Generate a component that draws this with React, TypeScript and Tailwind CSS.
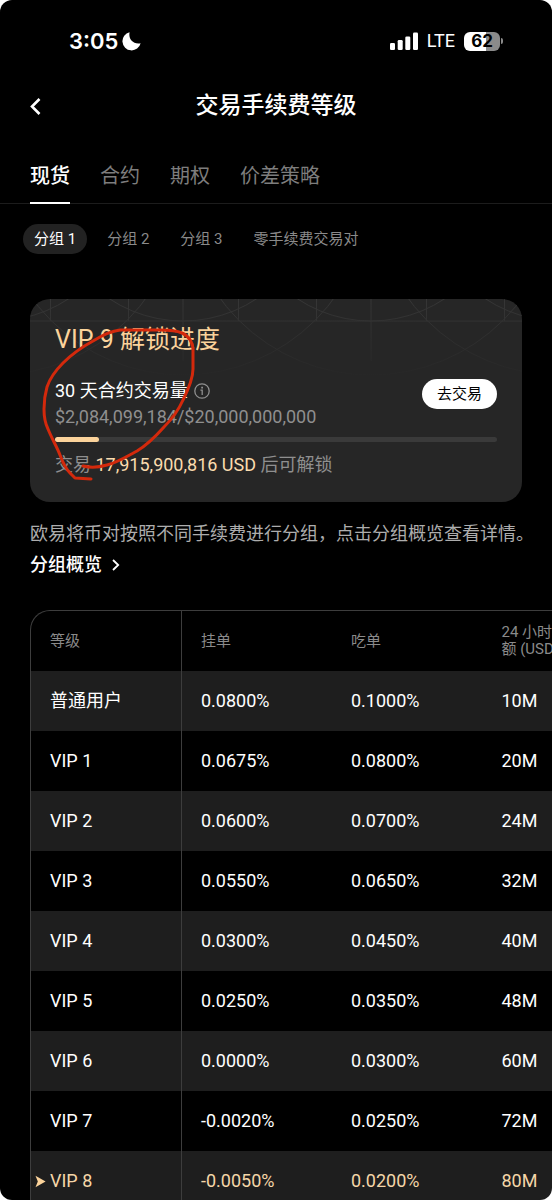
import React, { FC } from "react";

// types
type IFeeRow = {
  level: string;
  maker: string;
  taker: string;
  limit: string;
  current?: boolean;
};

const tabs = ["现货", "合约", "期权", "价差策略"];
const groups = ["分组 1", "分组 2", "分组 3", "零手续费交易对"];

const rows: IFeeRow[] = [
  { level: "普通用户", maker: "0.0800%", taker: "0.1000%", limit: "10M" },
  { level: "VIP 1", maker: "0.0675%", taker: "0.0800%", limit: "20M" },
  { level: "VIP 2", maker: "0.0600%", taker: "0.0700%", limit: "24M" },
  { level: "VIP 3", maker: "0.0550%", taker: "0.0650%", limit: "32M" },
  { level: "VIP 4", maker: "0.0300%", taker: "0.0450%", limit: "40M" },
  { level: "VIP 5", maker: "0.0250%", taker: "0.0350%", limit: "48M" },
  { level: "VIP 6", maker: "0.0000%", taker: "0.0300%", limit: "60M" },
  { level: "VIP 7", maker: "-0.0020%", taker: "0.0250%", limit: "72M" },
  {
    level: "VIP 8",
    maker: "-0.0050%",
    taker: "0.0200%",
    limit: "80M",
    current: true,
  },
];

const StatusBar: FC = () => {
  return (
    <div className="flex h-[82px] items-center justify-between pl-[69px] pr-[49px] font-['Inter',sans-serif]">
      <div className="flex items-center gap-1">
        <span className="text-[22px] font-semibold leading-6">3:05</span>
        <svg width="20" height="20" viewBox="0 0 20 20" fill="#fff">
          <path d="M7.6 1.2C6.2 7.5 10.6 13.6 18.6 12.2A9.2 9.2 0 1 1 7.6 1.2Z" />
        </svg>
      </div>
      <div className="flex items-center">
        <svg width="28" height="18" viewBox="0 0 28 18" fill="#fff">
          <rect x="0" y="11" width="5" height="7" rx="1.3" />
          <rect x="7.7" y="8" width="5" height="10" rx="1.3" />
          <rect x="15.3" y="4.5" width="5" height="13.5" rx="1.3" />
          <rect x="23" y="0.5" width="5" height="17.5" rx="1.3" />
        </svg>
        <span className="mx-[9px] font-['Roboto',sans-serif] text-lg leading-6">
          LTE
        </span>
        <div className="flex items-center">
          <span className="flex h-[19px] w-9 items-center justify-center rounded-md bg-linear-to-r from-white from-62% to-[#8a8a8a] to-62% text-[17px] font-bold leading-5 text-black">
            62
          </span>
          <span className="ml-px h-[6px] w-[2px] rounded-r-full bg-[#8a8a8a]" />
        </div>
      </div>
    </div>
  );
};

// faint rings and guide lines behind the card title
const CardPattern: FC = () => {
  return (
    <svg
      className="absolute left-0 top-0"
      width="100%"
      height="80"
      fill="none"
      stroke="url(#patternFade)"
    >
      <defs>
        <linearGradient
          id="patternFade"
          gradientUnits="userSpaceOnUse"
          x1="0"
          y1="0"
          x2="0"
          y2="80"
        >
          <stop offset="0" stopColor="#363636" />
          <stop offset="0.4" stopColor="#303030" />
          <stop offset="1" stopColor="#262626" />
        </linearGradient>
      </defs>
      {[-35, 153, 341, 529].map((x) => (
        <g key={x}>
          <circle cx={x} cy="-111" r="187" />
          <circle cx={x} cy="-111" r="133" />
        </g>
      ))}
      <path d="M20.5 0V22M98.5 0V22M208.5 0V22M286.5 0V22M396.5 0V22M474.5 0V22" />
      <path d="M153 0L153.1 62M341 0L341.1 62" />
      <path d="M0 22L600 22.1" />
    </svg>
  );
};

// hand drawn red mark around the trading volume
const Scribble: FC = () => {
  return (
    <svg
      className="pointer-events-none absolute left-0 top-0 overflow-visible"
      width="180"
      height="190"
      viewBox="0 0 180 190"
      fill="none"
      stroke="#d3290c"
      strokeWidth="3"
      strokeLinecap="round"
      strokeLinejoin="round"
    >
      <path d="M53 167C61 169 70 168 77 166C86 164 96 158 107 152C117 146 126 137 134 128C142 120 149 110 153 101C158 91 163 80 163 70V50C163 44 159 37 152 34C145 31 137 31 130 31H90C81 32 71 37 63 42C52 48 42 55 33 64C26 71 20 79 17 88C15 95 14 102 14 110C14 118 15 124 18 130C22 140 27 148 30 156C33 164 36 170 40 174L45 179L61 180" />
    </svg>
  );
};

const ProgressCard: FC = () => {
  return (
    <section className="relative mt-[45px] mx-[30px] rounded-[20px] bg-[#262626] px-[25px] pb-6 pt-[23px]">
      <div className="absolute inset-0 overflow-hidden rounded-[20px]">
        <CardPattern />
      </div>
      <div className="relative">
        <h2 className="text-[25px] leading-9 text-[#fbd39b]">VIP 9 解锁进度</h2>
        <div className="mt-5 flex items-start justify-between">
          <div>
            <div className="flex items-center gap-[6px] text-lg leading-[26px]">
              <span>30 天合约交易量</span>
              <svg
                width="16"
                height="16"
                viewBox="0 0 16 16"
                fill="none"
                stroke="#8f8f8f"
                strokeWidth="1.3"
              >
                <circle cx="8" cy="8" r="7.2" />
                <path d="M6.4 7.2H8.2V12" />
                <path d="M7.2 4.6H9" strokeWidth="1.7" />
              </svg>
            </div>
            <p className="text-lg leading-[26px] text-[#8f8f8f]">
              $2,084,099,184/$20,000,000,000
            </p>
          </div>
          <button className="mt-px h-[30px] rounded-full bg-white px-[15px] text-[15px] leading-5 text-black">
            去交易
          </button>
        </div>
        <div className="mt-[7px] h-[5px] rounded-full bg-[#3a3a3a]">
          <div className="h-full w-1/10 rounded-full bg-[#fbd39b]" />
        </div>
        <p className="mt-[10px] text-lg leading-[26px] text-[#8f8f8f]">
          交易 <span className="text-[#fbdcaf]">17,915,900,816 USD</span>{" "}
          后可解锁
        </p>
      </div>
      <Scribble />
    </section>
  );
};

const FeeTable: FC = () => {
  return (
    <div className="mt-8 ml-[30px] overflow-x-auto rounded-tl-[20px] border-l border-t border-[#3d3d3d] [scrollbar-width:none]">
      <table className="w-[602px] table-fixed border-collapse text-left text-lg leading-6">
        <thead>
          <tr className="h-[60px] text-[15px] leading-[17px] text-[#8a8a8a]">
            <th className="border-r border-[#3d3d3d] pl-[19px] font-normal">
              等级
            </th>
            <th className="pl-[19px] font-normal">挂单</th>
            <th className="pl-[19px] font-normal">吃单</th>
            <th className="pl-[19px] font-normal">
              24 小时交易
              <br />额 (USD)
            </th>
          </tr>
        </thead>
        <tbody>
          {rows.map((row) => (
            <tr
              key={row.level}
              className={`h-[60px] odd:bg-[#1e1e1e] ${row.current ? "text-[#f5d6a8]" : ""}`}
            >
              <td className="relative border-r border-[#3d3d3d] pl-[19px]">
                {row.current && (
                  <svg
                    className="absolute left-1 top-6"
                    width="11"
                    height="13"
                    viewBox="0 0 11 13"
                    fill="#fbd39b"
                  >
                    <path d="M0.5 0.8L10.6 6.5L0.5 12.2L2.8 6.5Z" />
                  </svg>
                )}
                {row.level}
              </td>
              <td className="pl-[19px]">{row.maker}</td>
              <td className="pl-[19px]">{row.taker}</td>
              <td className="pl-[19px]">{row.limit}</td>
            </tr>
          ))}
        </tbody>
      </table>
    </div>
  );
};

const App: FC = () => {
  return (
    <div className="h-screen bg-white">
      <main className="h-full overflow-y-auto overflow-x-hidden rounded-xl bg-black font-['Roboto','Noto_Sans_CJK_SC',sans-serif] text-white [scrollbar-width:none]">
        <StatusBar />

        <header className="grid h-12 grid-cols-[60px_1fr_60px] items-center">
          <button aria-label="返回" className="flex h-full items-center pl-[30px]">
            <svg
              width="11"
              height="17"
              viewBox="0 0 11 17"
              fill="none"
              stroke="#fff"
              strokeWidth="2.6"
            >
              <path d="M9.5 1L2 8.5L9.5 16" />
            </svg>
          </button>
          <h1 className="text-center text-[23px] font-medium leading-8">
            交易手续费等级
          </h1>
        </header>

        <nav className="mt-7 flex gap-[30px] border-b border-[#1c1c1c] px-[30px] text-xl leading-9">
          {tabs.map((tab, i) => (
            <button
              key={tab}
              className={
                i === 0
                  ? "-mb-px border-b-2 border-white pb-2 font-medium"
                  : "-mb-px border-b-2 border-transparent pb-2 text-[#7d7d7d]"
              }
            >
              {tab}
            </button>
          ))}
        </nav>

        <div className="mt-5 flex gap-[9px] px-[23px] text-[15px] leading-[30px]">
          {groups.map((group, i) => (
            <button
              key={group}
              className={
                i === 0
                  ? "rounded-full bg-[#222222] px-[11px]"
                  : "rounded-full px-[11px] text-[#8a8a8a]"
              }
            >
              {group}
            </button>
          ))}
        </div>

        <ProgressCard />

        <p className="mt-[19px] pl-[30px] pr-4 text-lg leading-[26px] text-[#adadad]">
          欧易将币对按照不同手续费进行分组，点击分组概览查看详情。
        </p>
        <a
          href="#groups"
          className="mt-[5px] ml-[30px] inline-flex items-center gap-[10px] text-lg font-medium leading-[26px]"
        >
          分组概览
          <svg
            width="8"
            height="12"
            viewBox="0 0 8 12"
            fill="none"
            stroke="#fff"
            strokeWidth="1.8"
          >
            <path d="M1 1L6.2 6L1 11" />
          </svg>
        </a>

        <FeeTable />
      </main>
    </div>
  );
};

export default App;
